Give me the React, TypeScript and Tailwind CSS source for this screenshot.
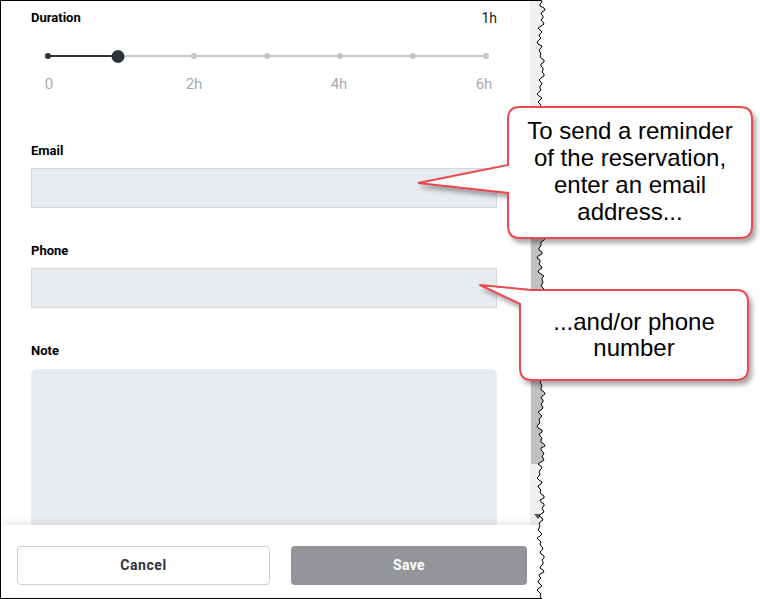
import React from "react"

const ui = { fontFamily: "Roboto, 'Liberation Sans', sans-serif" }
const note = { fontFamily: "'Liberation Sans', Arial, sans-serif" }

// jagged "torn paper" line on the right of the panel
const torn = Array.from({ length: 301 }, (_, i) => {
  const y = i * 2
  const x =
    541 +
    Math.round(Math.sin(i * 1.7) * 1.6 + Math.sin(i * 0.23) * 1.8 + Math.sin(i * 5.3) * 1.1)
  return `${x},${y}`
})

const ticks = [0, 1, 2, 3, 4, 5, 6]

function DurationSlider() {
  const step = 438 / 6
  const thumb = 70
  return (
    <div className="relative ml-[17px] h-[14px] w-[438px]">
      <div className="absolute left-0 right-0 top-[6px] h-[2px] bg-[#c9cacd]" />
      <div className="absolute left-0 top-[6px] h-[2px] bg-[#2e323b]" style={{ width: thumb }} />
      {ticks.map((t) => (
        <span
          key={t}
          className={`absolute top-[4px] size-[6px] -translate-x-1/2 rounded-full ${
            t === 0 ? "bg-[#2e323b]" : "bg-[#c3c4c8]"
          }`}
          style={{ left: t * step }}
        />
      ))}
      <span
        className="absolute top-[1px] size-[13px] -translate-x-1/2 rounded-full bg-[#2e323b]"
        style={{ left: thumb }}
      />
    </div>
  )
}

function Label({ children, className = "" }: { children: React.ReactNode; className?: string }) {
  return (
    <div className={`h-[16px] text-[13px] font-bold leading-[16px] text-black ${className}`}>
      {children}
    </div>
  )
}

export default function App() {
  return (
    <div className="relative h-[599px] w-[760px] overflow-hidden bg-white" style={ui}>
      <div className="flex h-full w-[552px] flex-col border-b border-l border-t border-black">
        <div className="flex min-h-0 flex-1">
          <div className="w-[529px] overflow-hidden pl-[30px] pr-[33px] pt-[9px]">
            <div className="flex h-[16px] items-center justify-between">
              <span className="text-[13px] font-bold text-black">Duration</span>
              <span className="text-[14px] text-[#1a1a1a]">1h</span>
            </div>
            <div className="mt-[23px]">
              <DurationSlider />
            </div>
            <div className="ml-[8px] mt-[11px] flex h-[20px] w-[455px] justify-between text-[15px] leading-[20px] text-[#a7abb1]">
              {["0", "2h", "4h", "6h"].map((l) => (
                <span key={l} className="w-[20px] text-center">
                  {l}
                </span>
              ))}
            </div>
            <div className="mt-[49px]">
              <Label>Email</Label>
              <div className="mt-[9px] h-[40px] border border-[#d5d8db] bg-[#e9ecef]" />
              <Label className="mt-[35px]">Phone</Label>
              <div className="mt-[9px] h-[40px] border border-[#d5d8db] bg-[#e9ecef]" />
              <Label className="mt-[35px]">Note</Label>
              <div className="mt-[10px] h-[220px] rounded-md bg-[#e9ecef]" />
            </div>
          </div>
          <div className="flex w-[22px] flex-col bg-[#f1f1f1]">
            <div className="h-[238px]" />
            <div className="ml-[1px] h-[225px] w-[12px] bg-[#c1c1c1]" />
            <div className="flex-1" />
            <div className="mb-[6px] ml-[4px] h-0 w-0 border-l-[4px] border-r-[4px] border-t-[5px] border-l-transparent border-r-transparent border-t-[#555]" />
          </div>
        </div>
        <div className="relative flex h-[73px] gap-[21px] bg-white pl-[16px] pt-[21px] shadow-[0_-4px_6px_rgba(0,0,0,0.07)]">
          <button className="h-[39px] w-[253px] rounded-[4px] border border-[#cfcfcf] bg-white text-[14px] font-bold tracking-[0.6px] text-[#2d3340]">
            Cancel
          </button>
          <button className="h-[39px] w-[236px] rounded-[4px] bg-[#939598] text-[14px] font-bold tracking-[0.4px] text-white">
            Save
          </button>
        </div>
      </div>

      {/* torn edge + callout shapes */}
      <svg className="pointer-events-none absolute left-0 top-0" width="760" height="599">
        <defs>
          <filter id="sh" x="-10%" y="-10%" width="130%" height="130%">
            <feDropShadow dx="3" dy="4" stdDeviation="2.5" floodColor="#000" floodOpacity="0.35" />
          </filter>
        </defs>
        <polygon points={`${torn.join(" ")} 760,599 760,0`} fill="#fff" />
        <polyline points={torn.join(" ")} fill="none" stroke="#000" strokeWidth="1" />
        <path
          d="M520 107 H740 Q752 107 752 119 V226 Q752 238 740 238 H520 Q508 238 508 226 V193 L418 183 L508 165 V119 Q508 107 520 107 Z"
          fill="#fff"
          stroke="#ea4a4f"
          strokeWidth="2"
          filter="url(#sh)"
        />
        <path
          d="M531 290 H736 Q748 290 748 302 V368 Q748 380 736 380 H532 Q520 380 520 368 V304 L480 285 Z"
          fill="#fff"
          stroke="#ea4a4f"
          strokeWidth="2"
          strokeLinejoin="round"
          filter="url(#sh)"
        />
      </svg>

      <div
        className="absolute left-[500px] top-[117px] w-[260px] text-center text-[24px] leading-[27px] text-black"
        style={note}
      >
        To send a reminder
        <br />
        of the reservation,
        <br />
        enter an email
        <br />
        address...
      </div>
      <div
        className="absolute left-[514px] top-[309px] w-[240px] text-center text-[24px] leading-[26px] text-black"
        style={note}
      >
        ...and/or phone
        <br />
        number
      </div>
    </div>
  )
}
